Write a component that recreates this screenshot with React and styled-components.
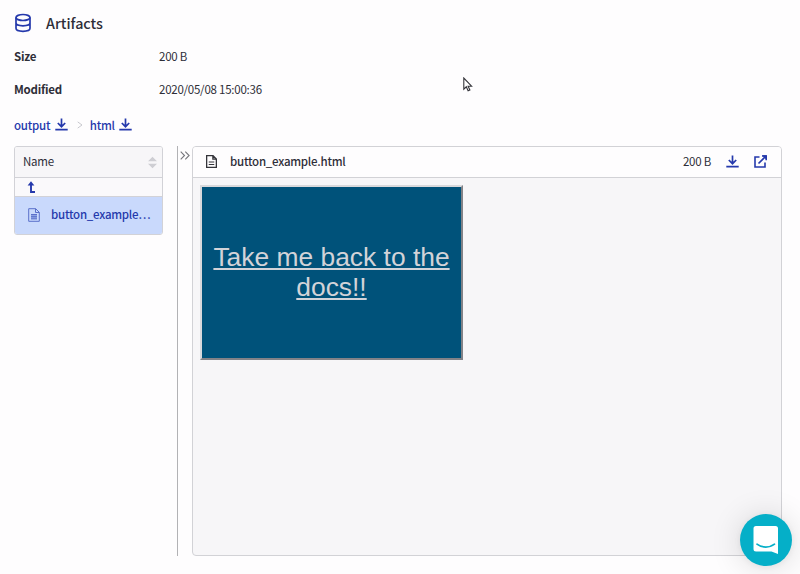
import React from 'react';
import styled, { createGlobalStyle } from 'styled-components';

const Global = createGlobalStyle`
  * { box-sizing: border-box; }
  body {
    margin: 0;
    background: #fefdfe;
    color: #2e2e38;
    font: 400 11.5px/20px "Noto Sans CJK SC", "Noto Sans CJK JP", sans-serif;
    letter-spacing: -.24px;
    overflow: hidden;
  }
`;

const blue = '#2539ac';

const Page = styled.main`
  width: 800px;
  height: 574px;
  padding: 10px 18px 18px 14px;
  display: flex;
  flex-direction: column;
`;

const Title = styled.header`
  display: flex;
  align-items: center;
  gap: 14px;
  height: 26px;
`;

const Heading = styled.h1`
  margin: 0;
  font-size: 14.3px;
  font-weight: 500;
  line-height: 26px;
  letter-spacing: 0;
`;

const Details = styled.dl`
  margin: 3px 0 0;
  display: grid;
  grid-template-columns: 145px 1fr;
  grid-auto-rows: 33px;
  align-items: center;
`;

const Term = styled.dt`
  font-weight: 700;
`;

const Value = styled.dd`
  margin: 0;
`;

const Crumbs = styled.nav`
  height: 41px;
  padding-bottom: 2px;
  display: flex;
  align-items: center;
  color: ${blue};
  font-weight: 500;
`;

const CrumbLink = styled.span`
  display: flex;
  align-items: center;
  gap: 4.5px;
`;

const Body = styled.div`
  display: flex;
  height: 410px;
`;

const Files = styled.section`
  width: 149px;
  height: 89px;
  border: 1px solid #d2d2d7;
  border-radius: 3px;
  overflow: hidden;
`;

const FilesHead = styled.div`
  height: 31px;
  padding: 0 5px 0 8px;
  display: flex;
  align-items: center;
  justify-content: space-between;
  background: #f7f6f8;
  border-bottom: 1px solid #d2d2d7;
`;

const ColumnLabel = styled.span`
  padding-bottom: 2px;
`;

const ParentRow = styled.div`
  height: 19px;
  padding: 0 0 1px 12px;
  display: flex;
  align-items: center;
  background: #faf9fb;
  border-bottom: 1px solid #d2d2d7;
`;

const FileRow = styled.div`
  height: 37px;
  padding: 0 0 1px 13px;
  display: flex;
  align-items: center;
  gap: 11px;
  background: #c9d9fc;
  color: ${blue};
  font-weight: 500;
`;

const FileLabel = styled.span`
  padding-bottom: 2px;
`;

const Splitter = styled.div`
  width: 15px;
  margin-left: 14px;
  padding: 5px 0 0 2px;
  border-left: 1px solid #b2b2b5;
`;

const Viewer = styled.section`
  width: 590px;
  border: 1px solid #d2d2d6;
  border-radius: 4px;
  background: #f7f6f8;
  overflow: hidden;
`;

const ViewerHead = styled.div`
  height: 31px;
  padding: 0 14px 2px 13px;
  display: flex;
  align-items: center;
  background: #fefdfe;
  border-bottom: 1px solid #d2d2d6;
`;

const FileName = styled.span`
  margin-left: 13px;
  flex: 1;
  font-weight: 500;
`;

const Actions = styled.div`
  display: flex;
  align-items: center;
  gap: 15px;
`;

const DocsButton = styled.button`
  display: block;
  margin: 7px 0 0 7px;
  width: 263px;
  height: 175px;
  padding: 0 8px 2px;
  border: 2px solid;
  border-color: #d9d9dc #828287 #828287 #d9d9dc;
  background: #00527a;
  color: #d2d3d8;
  font: 26.4px/30px "Liberation Sans", Arial, sans-serif;
  letter-spacing: 0;
  text-decoration: underline;
`;

const Chat = styled.button`
  position: absolute;
  left: 740px;
  top: 514px;
  width: 52px;
  height: 52px;
  padding: 0;
  border: 0;
  border-radius: 50%;
  display: grid;
  place-items: center;
  background: #05afc8;
  box-shadow: 0 1px 6px rgba(0, 0, 0, .06), 0 2px 32px rgba(0, 0, 0, .14);
`;

const Pointer = styled.svg`
  position: absolute;
  left: 462px;
  top: 77px;
`;

const Icon = styled.svg`
  display: block;
  flex: none;
  fill: none;
  stroke: ${p => p.$color || blue};
  stroke-width: ${p => p.$weight || 1.7};
`;

const Separator = styled(Icon)`
  margin: 0 7px 0 9px;
`;

const Download = () => (
  <Icon width="13" height="13" viewBox="0 0 13 13">
    <path d="M6.5 .5v8M2.8 5l3.7 3.7L10.2 5M.3 11.6h12.4" />
  </Icon>
);

const FileIcon = ({ color, weight, filled }) => (
  <Icon width={filled ? 12 : 11} height={filled ? 14 : 13} viewBox="0 0 12 14" $color={color} $weight={weight}>
    <path d="M.7 .7h7l3.6 3.6v9H.7zM7.5 .7v3.8h3.8" />
    {filled && <path d="M3 6h6v5H3z" fill="#8da2e4" stroke="none" />}
    {filled
      ? <path d="M3 6.5h6M3 8.7h6M3 10.9h6" />
      : <path d="M3 7.5h6M3 10.2h6" strokeWidth="1.1" />}
  </Icon>
);

export default function App() {
  return (
    <>
      <Global />
      <Page>
        <Title>
          <Icon width="18" height="20" viewBox="0 0 18 20" $weight={1.7}>
            <ellipse cx="9" cy="4.5" rx="7" ry="3" />
            <path d="M2 4.5v10.8c0 1.7 3 3 7 3s7-1.3 7-3V4.5M2 9.8c0 1.7 3 3 7 3s7-1.3 7-3" />
          </Icon>
          <Heading>Artifacts</Heading>
        </Title>
        <Details>
          <Term>Size</Term>
          <Value>200 B</Value>
          <Term>Modified</Term>
          <Value>2020/05/08 15:00:36</Value>
        </Details>
        <Crumbs>
          <CrumbLink>output<Download /></CrumbLink>
          <Separator width="6" height="8" viewBox="0 0 6 8" $color="#c8c8ce" $weight={1}>
            <path d="M.7 .9L5 4 .7 7.1" />
          </Separator>
          <CrumbLink>html<Download /></CrumbLink>
        </Crumbs>
        <Body>
          <Files>
            <FilesHead>
              <ColumnLabel>Name</ColumnLabel>
              <svg width="9" height="13" viewBox="0 0 9 13" fill="#ceced3">
                <path d="M0 5.3L4.5 .8 9 5.3zM0 7.7h9L4.5 12.2z" />
              </svg>
            </FilesHead>
            <ParentRow>
              <Icon width="9" height="12" viewBox="0 0 9 12" $weight={1.9}>
                <path d="M4 2v9h4" />
                <path d="M.6 4.4L4 .2l3.4 4.200z" fill={blue} stroke="none" />
              </Icon>
            </ParentRow>
            <FileRow>
              <FileIcon color="#5b70ca" weight={1} filled />
              <FileLabel>button_example…</FileLabel>
            </FileRow>
          </Files>
          <Splitter>
            <Icon width="10" height="9" viewBox="0 0 10 9" $color="#76767c" $weight={1.1}>
              <path d="M.7 .7l3.8 3.8L.7 8.3M5.3 .7l3.8 3.8-3.8 3.8" />
            </Icon>
          </Splitter>
          <Viewer>
            <ViewerHead>
              <FileIcon color="#34343a" weight={1.4} />
              <FileName>button_example.html</FileName>
              <Actions>
                <span>200 B</span>
                <Download />
                <Icon width="13" height="13" viewBox="0 0 13 13" $weight={1.6}>
                  <path d="M5.5 2H1v10h10V7.5M4.5 8.5L11.5 1.5M8 1h4.2v4.2" />
                  <path d="M8 .3h4.7V5z" fill={blue} stroke="none" />
                </Icon>
              </Actions>
            </ViewerHead>
            <DocsButton>Take me back to the docs!!</DocsButton>
          </Viewer>
        </Body>
      </Page>
      <Pointer width="11" height="16" viewBox="0 0 11 16" fill="#fff" stroke="#34343a" strokeWidth="1.1">
        <path d="M1.8 1v11.2l2.5-2.4 1.8 4 1.8-.8-1.8-3.8h3.5z" />
      </Pointer>
      <Chat aria-label="Open chat">
        <svg width="26" height="28" viewBox="0 0 26 28">
          <path d="M3 0h19.5A2.5 2.5 0 0 1 25 2.5V28l-6.5-2.5H3A2.5 2.5 0 0 1 .5 23V2.5A2.5 2.5 0 0 1 3 0z" fill="#fff" />
          <path d="M4 18.2c4.8 3.8 12.7 3.8 17.5 0" fill="none" stroke="#05afc8" strokeWidth="1.7" strokeLinecap="round" />
        </svg>
      </Chat>
    </>
  );
}
